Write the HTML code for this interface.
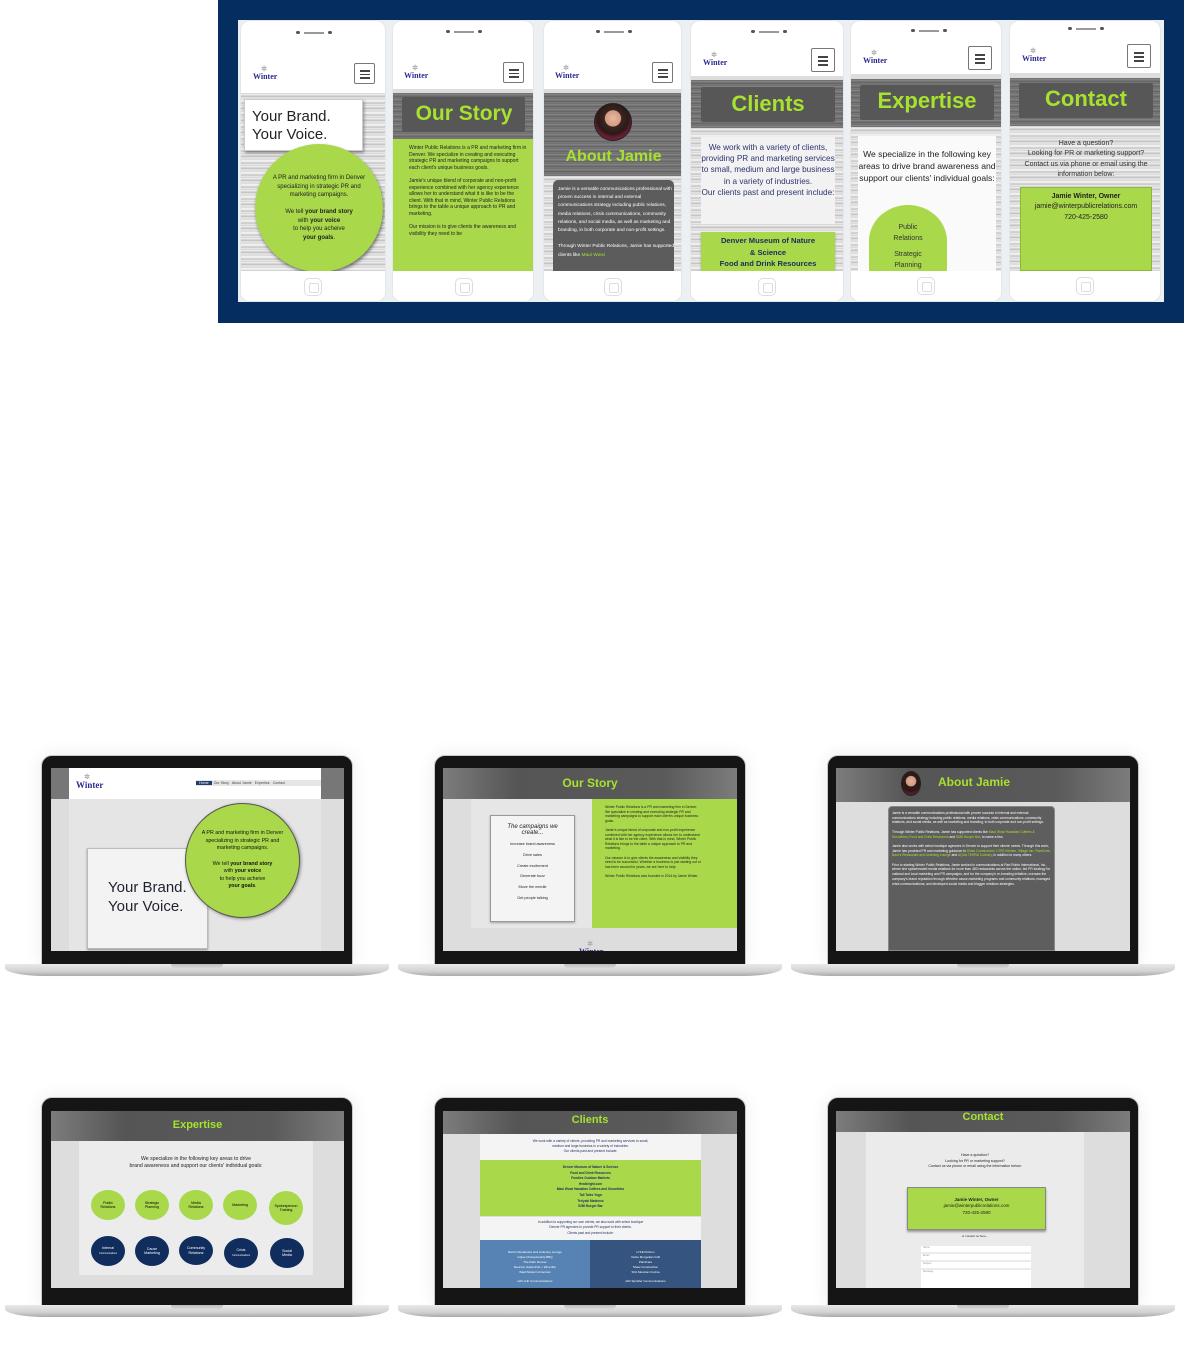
<!DOCTYPE html>
<html><head><meta charset="utf-8">
<style>
*{margin:0;padding:0;box-sizing:border-box}
body{width:1184px;height:1347px;background:#fff;position:relative;overflow:hidden;font-family:"Liberation Sans",sans-serif}
.a{position:absolute}
.banner{left:218px;top:0;width:966px;height:323px;background:#052d5f}
.phone{background:#fff;border:1px solid #e4e6e8;border-radius:10px;overflow:hidden}
.streak{background:repeating-linear-gradient(180deg,#d0d0d0 0px,#f4f4f4 2px,#b8b8b8 3px,#ececec 5px,#d4d4d4 6px,#fafafa 8px,#c4c4c4 10px,#f0f0f0 12px)}
.dstreak{background:repeating-linear-gradient(180deg,#6a6a6a 0,#8a8a8a 2px,#5e5e5e 3px,#7d7d7d 5px)}
.green{background:#a9d84a}
.gt{color:#a6e22e;font-weight:bold;text-align:center}
.logo{font-family:"Liberation Serif",serif;font-weight:bold;color:#2a2b8e;font-size:8px;line-height:8px}
.logo i{display:block;font-style:normal;color:#aaa;font-size:7px;text-align:center;width:22px}
.ham{border:1px solid #777;border-radius:2px;background:#fff;width:21px;height:21px}
.ham b{position:absolute;left:5px;width:10px;height:1.5px;background:#444}
.home{width:18px;height:18px;border:1px solid #ddd;border-radius:5px}
.home:after{content:"";position:absolute;left:4px;top:4px;width:8px;height:8px;border:1px solid #ddd;border-radius:2px}
.tx{font-size:5px;line-height:6.6px;color:#222}
.bezel{background:#151515;border:1px solid #c9c9c9;border-radius:11px 11px 0 0;box-shadow:0 0 18px rgba(0,0,0,.08)}
.screen{overflow:hidden;background:#ddd}
.base{background:linear-gradient(180deg,#e8e8e8,#d2d2d2 60%,#a9a9a9);border-radius:0 0 40px 40px/0 0 8px 8px;height:12px}
.notch{background:linear-gradient(180deg,#bdbdbd,#d6d6d6);border-radius:0 0 5px 5px;height:4px;width:52px}
.hdr{background:linear-gradient(90deg,#7c7c7c,#555 25%,#5a5a5a 75%,#7c7c7c)}
.lt{font-size:3.4px;line-height:4.6px;color:#222}
.circ{border-radius:50%;text-align:center;font-size:3.6px;line-height:4.2px;display:flex;align-items:center;justify-content:center}
.circ>div{width:100%}
</style></head><body>

<div class="a banner"></div>
<div class="a" style="left:238px;top:20px;width:926px;height:282px;background:#edf0f2"></div>

<!-- PHONE 1 -->
<div class="a phone" style="left:240px;top:20px;width:146px;height:282px">
 <div class="a" style="left:55px;top:10px;width:4px;height:3px;border-radius:2px;background:#555"></div>
 <div class="a" style="left:63px;top:11px;width:20px;height:1.5px;background:#999"></div>
 <div class="a" style="left:87px;top:10px;width:4px;height:3px;border-radius:2px;background:#555"></div>
 <div class="a logo" style="left:12px;top:44px"><i>✲</i>Winter</div>
 <div class="a ham" style="left:113px;top:42px"><b style="top:6px"></b><b style="top:9.5px"></b><b style="top:13px"></b></div>
 <div class="a streak" style="left:0;top:72px;width:146px;height:178px"></div>
 <div class="a" style="left:3px;top:78px;width:119px;height:52px;background:#fff;border:1px solid #ccc;box-shadow:1px 2px 3px rgba(0,0,0,.4);font-size:15px;line-height:18px;padding:8px 0 0 7px;color:#222">Your Brand.<br>Your Voice.</div>
 <div class="a green circ" style="left:14px;top:123px;width:128px;height:128px;box-shadow:1px 2px 3px rgba(0,0,0,.5);font-size:6px;line-height:8.5px;color:#222;padding:10px"><div>A PR and marketing firm in Denver specializing in strategic PR and marketing campaigns.<br><br>We tell <b>your brand story</b><br>with <b>your voice</b><br>to help you acheive<br><b>your goals</b>.</div></div>
 <div class="a" style="left:0;top:250px;width:146px;height:32px;background:#fff"></div>
 <div class="a home" style="left:63px;top:257px"></div>
</div>

<!-- PHONE 2 -->
<div class="a phone" style="left:392px;top:20px;width:142px;height:282px">
 <div class="a" style="left:53px;top:9px;width:4px;height:3px;border-radius:2px;background:#555"></div>
 <div class="a" style="left:61px;top:10px;width:20px;height:1.5px;background:#999"></div>
 <div class="a" style="left:85px;top:9px;width:4px;height:3px;border-radius:2px;background:#555"></div>
 <div class="a logo" style="left:11px;top:43px"><i>✲</i>Winter</div>
 <div class="a ham" style="left:110px;top:41px"><b style="top:6px"></b><b style="top:9.5px"></b><b style="top:13px"></b></div>
 <div class="a" style="left:0;top:68px;width:142px;height:4px;background:#ddd"></div>
 <div class="a dstreak" style="left:0;top:72px;width:142px;height:46px"></div>
 <div class="a" style="left:9px;top:76px;width:123px;height:35px;background:#575757;border-radius:2px"></div>
 <div class="a gt" style="left:0;top:80px;width:142px;font-size:21px;line-height:26px">Our Story</div>
 <div class="a green" style="left:0;top:118px;width:142px;height:132px"></div>
 <div class="a tx" style="left:16px;top:124px;width:118px">Winter Public Relations is a PR and marketing firm in Denver. We specialize in creating and executing strategic PR and marketing campaigns to support each client's unique business goals.<br><br>Jamie's unique blend of corporate and non-profit experience combined with her agency experience allows her to understand what it is like to be the client. With that in mind, Winter Public Relations brings to the table a unique approach to PR and marketing.<br><br>Our mission is to give clients the awareness and visibility they need to be</div>
 <div class="a" style="left:0;top:250px;width:142px;height:32px;background:#fff"></div>
 <div class="a home" style="left:62px;top:257px"></div>
</div>

<!-- PHONE 3 -->
<div class="a phone" style="left:543px;top:20px;width:139px;height:282px">
 <div class="a" style="left:52px;top:9px;width:4px;height:3px;border-radius:2px;background:#555"></div>
 <div class="a" style="left:60px;top:10px;width:20px;height:1.5px;background:#999"></div>
 <div class="a" style="left:84px;top:9px;width:4px;height:3px;border-radius:2px;background:#555"></div>
 <div class="a logo" style="left:11px;top:43px"><i>✲</i>Winter</div>
 <div class="a ham" style="left:108px;top:41px"><b style="top:6px"></b><b style="top:9.5px"></b><b style="top:13px"></b></div>
 <div class="a" style="left:0;top:68px;width:139px;height:4px;background:#ddd"></div>
 <div class="a dstreak" style="left:0;top:72px;width:139px;height:83px"></div>
 <div class="a" style="left:50px;top:82px;width:38px;height:38px;border-radius:50%;background:radial-gradient(circle at 50% 40%,#e7b9a0 0,#d49a80 28%,#3a2520 30%,#2c1a17 55%,#6b1d3a 70%);border:1px solid #222"></div>
 <div class="a gt" style="left:0;top:126px;width:139px;font-size:16px;line-height:20px">About Jamie</div>
 <div class="a streak" style="left:0;top:155px;width:139px;height:95px"></div>
 <div class="a" style="left:9px;top:159px;width:121px;height:91px;background:#5c5c5c;border-radius:5px 5px 0 0"></div>
 <div class="a tx" style="left:14px;top:165px;width:116px;color:#fff;font-size:4.8px;line-height:8.2px">Jamie is a versatile communications professional with proven success in internal and external communications strategy including public relations, media relations, crisis communications, community relations, and social media, as well as marketing and branding, in both corporate and non-profit settings.<br><br>Through Winter Public Relations, Jamie has supported clients like <span style="color:#a6e22e">Maui Wowi</span></div>
 <div class="a" style="left:0;top:250px;width:139px;height:32px;background:#fff"></div>
 <div class="a home" style="left:60px;top:257px"></div>
</div>

<!-- PHONE 4 -->
<div class="a phone" style="left:690px;top:20px;width:154px;height:282px">
 <div class="a" style="left:60px;top:9px;width:4px;height:3px;border-radius:2px;background:#555"></div>
 <div class="a" style="left:68px;top:10px;width:20px;height:1.5px;background:#999"></div>
 <div class="a" style="left:92px;top:9px;width:4px;height:3px;border-radius:2px;background:#555"></div>
 <div class="a logo" style="left:12px;top:30px"><i>✲</i>Winter</div>
 <div class="a ham" style="left:120px;top:27px;width:24px;height:24px"><b style="top:7px;left:6px"></b><b style="top:11px;left:6px"></b><b style="top:15px;left:6px"></b></div>
 <div class="a" style="left:0;top:55px;width:154px;height:4px;background:#ddd"></div>
 <div class="a dstreak" style="left:0;top:59px;width:154px;height:48px"></div>
 <div class="a" style="left:10px;top:66px;width:134px;height:35px;background:#575757;border-radius:2px"></div>
 <div class="a gt" style="left:0;top:69px;width:154px;font-size:22px;line-height:28px">Clients</div>
 <div class="a streak" style="left:0;top:107px;width:154px;height:143px"></div>
 <div class="a" style="left:10px;top:116px;width:134px;height:87px;background:#f2f2f2"></div>
 <div class="a" style="left:10px;top:121px;width:134px;text-align:center;font-size:8.2px;line-height:11.2px;color:#2b3470">We work with a variety of clients, providing PR and marketing services to small, medium and large business in a variety of industries.<br>Our clients past and present include:</div>
 <div class="a green" style="left:10px;top:211px;width:134px;height:39px;box-shadow:0 1px 2px rgba(0,0,0,.3)"></div>
 <div class="a" style="left:10px;top:214px;width:134px;text-align:center;font-size:7.6px;line-height:11.5px;color:#1c2a5e;font-weight:bold">Denver Museum of Nature<br>&amp; Science<br>Food and Drink Resources</div>
 <div class="a" style="left:0;top:250px;width:154px;height:32px;background:#fff"></div>
 <div class="a home" style="left:67px;top:257px"></div>
</div>

<!-- PHONE 5 -->
<div class="a phone" style="left:850px;top:20px;width:152px;height:282px">
 <div class="a" style="left:60px;top:8px;width:4px;height:3px;border-radius:2px;background:#555"></div>
 <div class="a" style="left:68px;top:9px;width:20px;height:1.5px;background:#999"></div>
 <div class="a" style="left:92px;top:8px;width:4px;height:3px;border-radius:2px;background:#555"></div>
 <div class="a logo" style="left:12px;top:28px"><i>✲</i>Winter</div>
 <div class="a ham" style="left:117px;top:25px;width:24px;height:24px"><b style="top:7px;left:6px"></b><b style="top:11px;left:6px"></b><b style="top:15px;left:6px"></b></div>
 <div class="a" style="left:0;top:53px;width:152px;height:5px;background:#ddd"></div>
 <div class="a dstreak" style="left:0;top:58px;width:152px;height:48px"></div>
 <div class="a" style="left:9px;top:64px;width:134px;height:35px;background:#575757;border-radius:2px"></div>
 <div class="a gt" style="left:0;top:66px;width:152px;font-size:22px;line-height:28px">Expertise</div>
 <div class="a streak" style="left:0;top:106px;width:152px;height:144px"></div>
 <div class="a" style="left:7px;top:115px;width:138px;height:135px;background:#fafafa"></div>
 <div class="a" style="left:7px;top:127px;width:138px;text-align:center;font-size:8.6px;line-height:12.2px;color:#222">We specialize in the following key areas to drive brand awareness and support our clients' individual goals:</div>
 <div class="a green" style="left:18px;top:184px;width:78px;height:90px;border-radius:50% 50% 0 0/40% 40% 0 0"></div>
 <div class="a" style="left:18px;top:202px;width:78px;text-align:center;font-size:7px;line-height:10.5px;color:#333">Public<br>Relations<br><span style="display:block;height:6px"></span>Strategic<br>Planning</div>
 <div class="a" style="left:0;top:250px;width:152px;height:32px;background:#fff"></div>
 <div class="a home" style="left:66px;top:256px"></div>
</div>

<!-- PHONE 6 -->
<div class="a phone" style="left:1009px;top:20px;width:152px;height:282px">
 <div class="a" style="left:58px;top:6px;width:4px;height:3px;border-radius:2px;background:#555"></div>
 <div class="a" style="left:66px;top:7px;width:20px;height:1.5px;background:#999"></div>
 <div class="a" style="left:90px;top:6px;width:4px;height:3px;border-radius:2px;background:#555"></div>
 <div class="a logo" style="left:12px;top:26px"><i>✲</i>Winter</div>
 <div class="a ham" style="left:117px;top:23px;width:24px;height:24px"><b style="top:7px;left:6px"></b><b style="top:11px;left:6px"></b><b style="top:15px;left:6px"></b></div>
 <div class="a" style="left:0;top:52px;width:152px;height:5px;background:#ddd"></div>
 <div class="a dstreak" style="left:0;top:57px;width:152px;height:48px"></div>
 <div class="a" style="left:9px;top:62px;width:134px;height:35px;background:#575757;border-radius:2px"></div>
 <div class="a gt" style="left:0;top:64px;width:152px;font-size:22px;line-height:28px">Contact</div>
 <div class="a streak" style="left:0;top:105px;width:152px;height:145px"></div>
 <div class="a" style="left:4px;top:118px;width:144px;text-align:center;font-size:7px;line-height:10.3px;color:#333">Have a question?<br>Looking for PR or marketing support?<br>Contact us via phone or email using the information below:</div>
 <div class="a green" style="left:10px;top:166px;width:132px;height:84px;border:1px solid #8cb83a"></div>
 <div class="a" style="left:10px;top:171px;width:132px;text-align:center;font-size:7px;line-height:10.3px;color:#222"><b>Jamie Winter, Owner</b><br>jamie@winterpublicrelations.com<br>720-425-2580</div>
 <div class="a" style="left:0;top:250px;width:152px;height:32px;background:#fff"></div>
 <div class="a home" style="left:66px;top:256px"></div>
</div>

<!-- ROW 1 LAPTOP 1 -->
<div class="a bezel" style="left:41px;top:755px;width:312px;height:210px"></div>
<div class="a screen streak" style="left:51px;top:768px;width:293px;height:183px">
 <div class="a" style="left:0;top:0;width:293px;height:31px;background:linear-gradient(90deg,#777 0,#777 18px,#fff 18px,#fff 270px,#777 270px)"></div>
 <div class="a logo" style="left:25px;top:5px;font-size:9px"><i>✲</i>Winter</div>
 <div class="a" style="left:145px;top:12px;width:125px;height:6px;background:#e6e6e6"></div>
 <div class="a" style="left:145px;top:12px;font-size:3.6px;line-height:6px;color:#444;white-space:nowrap"><span style="background:#1e3d6e;color:#fff;padding:0 3px">Home</span>&nbsp; Our Story &nbsp; About Jamie &nbsp; Expertise &nbsp; Contact</div>
 <div class="a" style="left:18px;top:31px;width:252px;height:152px;background:rgba(255,255,255,.25)"></div>
 <div class="a" style="left:36px;top:80px;width:121px;height:101px;background:#f3f3f3;border:1px solid #bbb;box-shadow:0 1px 2px rgba(0,0,0,.4)"></div>
 <div class="a" style="left:57px;top:110px;font-size:15px;line-height:19px;color:#1f2230">Your Brand.<br>Your Voice.</div>
 <div class="a green circ" style="left:134px;top:35px;width:115px;height:115px;border:1px solid #555;box-shadow:1px 1px 3px rgba(0,0,0,.4);font-size:5.3px;line-height:7.6px;color:#111;padding:8px"><div>A PR and marketing firm in Denver specializing in strategic PR and marketing campaigns.<br><br>We tell <b>your brand story</b><br>with <b>your voice</b><br>to help you acheive<br><b>your goals</b>.</div></div>
</div>
<div class="a base" style="left:5px;top:964px;width:384px"></div>
<div class="a notch" style="left:171px;top:964px"></div>

<!-- ROW 1 LAPTOP 2 -->
<div class="a bezel" style="left:434px;top:755px;width:312px;height:210px"></div>
<div class="a screen streak" style="left:443px;top:768px;width:294px;height:183px">
 <div class="a hdr" style="left:0;top:0;width:294px;height:31px"></div>
 <div class="a gt" style="left:0;top:8px;width:294px;font-size:12px">Our Story</div>
 <div class="a" style="left:28px;top:31px;width:121px;height:129px;background:#e6e6e6"></div>
 <div class="a" style="left:47px;top:47px;width:85px;height:107px;background:#f4f4f4;border:1px solid #999;box-shadow:0 1px 2px rgba(0,0,0,.3)"></div>
 <div class="a" style="left:47px;top:56px;width:85px;text-align:center;font-size:3.8px;line-height:10.8px;color:#222"><i style="font-size:6px;line-height:6px;display:block;margin-bottom:3px">The campaigns we<br>create...</i>Increase brand awareness<br>Drive sales<br>Create excitement<br>Generate buzz<br>Move the needle<br>Get people talking</div>
 <div class="a green" style="left:149px;top:31px;width:145px;height:129px"></div>
 <div class="a lt" style="left:162px;top:37px;width:96px">Winter Public Relations is a PR and marketing firm in Denver. We specialize in creating and executing strategic PR and marketing campaigns to support each client's unique business goals.<br><br>Jamie's unique blend of corporate and non-profit experience combined with her agency experience allows her to understand what it is like to be the client. With that in mind, Winter Public Relations brings to the table a unique approach to PR and marketing.<br><br>Our mission is to give clients the awareness and visibility they need to be successful. Whether a business is just starting out or has been around for years, we are here to help.<br><br>Winter Public Relations was founded in 2014 by Jamie Winter.</div>
 <div class="a logo" style="left:136px;top:172px"><i>✲</i>Winter</div>
</div>
<div class="a base" style="left:398px;top:964px;width:384px"></div>
<div class="a notch" style="left:564px;top:964px"></div>

<!-- ROW 1 LAPTOP 3 -->
<div class="a bezel" style="left:827px;top:755px;width:312px;height:210px"></div>
<div class="a screen streak" style="left:836px;top:768px;width:294px;height:183px">
 <div class="a hdr" style="left:0;top:0;width:294px;height:34px"></div>
 <div class="a" style="left:65px;top:3px;width:20px;height:25px;border-radius:50%;background:radial-gradient(circle at 50% 40%,#e2b49c 0,#d09a80 30%,#2c1a17 34%,#2c1a17 60%,#5a1a30 75%);border:1px solid #222"></div>
 <div class="a gt" style="left:90px;top:7px;width:90px;font-size:12px;text-align:left;margin-left:12px">About Jamie</div>
 <div class="a" style="left:52px;top:38px;width:167px;height:145px;background:#5e5e5e;border-radius:4px 4px 0 0;border:1px solid #888"></div>
 <div class="a lt" style="left:56px;top:43px;width:160px;color:#fff;font-size:3.3px;line-height:4.7px">Jamie is a versatile communications professional with proven success in internal and external communications strategy including public relations, media relations, crisis communications, community relations, and social media, as well as marketing and branding, in both corporate and non-profit settings.<br><br>Through Winter Public Relations, Jamie has supported clients like <span style="color:#a6e22e">Maui Wowi Hawaiian Coffees &amp; Smoothies</span>, <span style="color:#a6e22e">Food and Drink Resources</span> and <span style="color:#a6e22e">5280 Burger Bar</span>, to name a few.<br><br>Jamie also works with select boutique agencies in Denver to support their clients' needs. Through this work, Jamie has provided PR and marketing guidance to <span style="color:#a6e22e">Shaw Construction, LYFE Kitchen, Village Inn, PaintCare, Baur's Restaurant and Listening Lounge</span> and <span style="color:#a6e22e">AQUA TERRA Culinary</span>, in addition to many others.<br><br>Prior to starting Winter Public Relations, Jamie worked in communications at Red Robin International, Inc., where she spearheaded media relations for more than 480 restaurants across the nation; led PR strategy for national and local marketing and PR campaigns, and for the company's re-branding initiative; oversaw the company's brand reputation through effective cause-marketing programs and community relations; managed crisis communications; and developed social media and blogger relations strategies.</div>
</div>
<div class="a base" style="left:791px;top:964px;width:384px"></div>
<div class="a notch" style="left:957px;top:964px"></div>

<!-- ROW 2 LAPTOP 1 Expertise -->
<div class="a bezel" style="left:41px;top:1097px;width:312px;height:209px"></div>
<div class="a screen streak" style="left:51px;top:1111px;width:293px;height:177px">
 <div class="a hdr" style="left:0;top:0;width:293px;height:30px"></div>
 <div class="a gt" style="left:0;top:8px;width:293px;font-size:11px">Expertise</div>
 <div class="a" style="left:28px;top:30px;width:234px;height:134px;background:#ececec"></div>
 <div class="a" style="left:28px;top:45px;width:234px;text-align:center;font-size:5.2px;line-height:7px;color:#222">We specialize in the following key areas to drive<br>brand awareness and support our clients' individual goals:</div>
 <div class="a green circ" style="left:40px;top:79px;width:34px;height:30px"><div>Public<br>Relations</div></div>
 <div class="a green circ" style="left:84px;top:79px;width:34px;height:30px"><div>Strategic<br>Planning</div></div>
 <div class="a green circ" style="left:128px;top:79px;width:34px;height:30px"><div>Media<br>Relations</div></div>
 <div class="a green circ" style="left:172px;top:79px;width:34px;height:30px"><div>Marketing</div></div>
 <div class="a green circ" style="left:218px;top:80px;width:34px;height:34px"><div>Spokesperson<br>Training</div></div>
 <div class="a circ" style="left:40px;top:125px;width:34px;height:30px;background:#102d5e;color:#fff"><div>Internal<br><span style="font-size:2.4px">Communications</span></div></div>
 <div class="a circ" style="left:84px;top:125px;width:34px;height:30px;background:#102d5e;color:#fff"><div>Cause<br>Marketing</div></div>
 <div class="a circ" style="left:128px;top:125px;width:34px;height:29px;background:#102d5e;color:#fff"><div>Community<br>Relations</div></div>
 <div class="a circ" style="left:173px;top:127px;width:34px;height:30px;background:#102d5e;color:#fff"><div>Crisis<br><span style="font-size:2.4px">Communications</span></div></div>
 <div class="a circ" style="left:219px;top:127px;width:34px;height:30px;background:#102d5e;color:#fff"><div>Social<br>Media</div></div>
</div>
<div class="a base" style="left:5px;top:1305px;width:384px"></div>
<div class="a notch" style="left:171px;top:1305px"></div>

<!-- ROW 2 LAPTOP 2 Clients -->
<div class="a bezel" style="left:434px;top:1097px;width:312px;height:209px"></div>
<div class="a screen streak" style="left:443px;top:1111px;width:294px;height:177px">
 <div class="a hdr" style="left:0;top:0;width:294px;height:23px"></div>
 <div class="a gt" style="left:0;top:3px;width:294px;font-size:11px">Clients</div>
 <div class="a" style="left:37px;top:23px;width:221px;height:26px;background:#f4f4f4"></div>
 <div class="a lt" style="left:37px;top:28px;width:221px;text-align:center;font-size:3.3px;line-height:5px;color:#1c2a5e">We work with a variety of clients, providing PR and marketing services to small,<br>medium and large business in a variety of industries.<br>Our clients past and present include:</div>
 <div class="a green" style="left:37px;top:49px;width:221px;height:56px"></div>
 <div class="a lt" style="left:37px;top:54px;width:221px;text-align:center;font-weight:bold;font-size:3.2px;line-height:5.6px;color:#1c2a5e">Denver Museum of Nature &amp; Science<br>Food and Drink Resources<br>Foodies Outdoor Markets<br>Healbright.com<br>Maui Wowi Hawaiian Coffees and Smoothies<br>Tall Tales Yoga<br>Teriyaki Madness<br>5280 Burger Bar</div>
 <div class="a" style="left:37px;top:106px;width:221px;height:23px;background:#f4f4f4"></div>
 <div class="a lt" style="left:37px;top:109px;width:221px;text-align:center;font-size:3.2px;line-height:5.4px;color:#1c2a5e">In addition to supporting our own clients, we also work with select boutique<br>Denver PR agencies to provide PR support to their clients.<br>Clients past and present include:</div>
 <div class="a" style="left:37px;top:129px;width:110px;height:48px;background:#5683b3"></div>
 <div class="a" style="left:147px;top:129px;width:111px;height:48px;background:#35547f"></div>
 <div class="a lt" style="left:37px;top:139px;width:110px;text-align:center;color:#fff;font-size:3px;line-height:4.9px">Baur's Restaurant and Listening Lounge<br>GQue Championship BBQ<br>The Palm Denver<br>Reunion GastroPub + Wine Bar<br>Ward Modern American<br><br>with LHF Communications</div>
 <div class="a lt" style="left:147px;top:139px;width:111px;text-align:center;color:#fff;font-size:3px;line-height:4.9px">LYFE Kitchen<br>NuHu Mongolian Grill<br>PaintCare<br>Shaw Construction<br>SOL Mexican Cocina<br><br>with Spindler Communications</div>
</div>
<div class="a base" style="left:398px;top:1305px;width:384px"></div>
<div class="a notch" style="left:564px;top:1305px"></div>

<!-- ROW 2 LAPTOP 3 Contact -->
<div class="a bezel" style="left:827px;top:1097px;width:312px;height:209px"></div>
<div class="a screen streak" style="left:836px;top:1111px;width:294px;height:177px">
 <div class="a hdr" style="left:0;top:0;width:294px;height:21px"></div>
 <div class="a gt" style="left:0;top:0;width:294px;font-size:11px">Contact</div>
 <div class="a" style="left:30px;top:21px;width:218px;height:156px;background:rgba(245,245,245,.55)"></div>
 <div class="a lt" style="left:30px;top:42px;width:218px;text-align:center;font-size:3.6px;line-height:5.6px">Have a question?<br>Looking for PR or marketing support?<br>Contact us via phone or email using the information below:</div>
 <div class="a green" style="left:71px;top:76px;width:139px;height:43px;border:1px solid #888;box-shadow:0 2px 2px rgba(0,0,0,.35)"></div>
 <div class="a lt" style="left:71px;top:86px;width:139px;text-align:center;font-size:4.5px;line-height:6.3px"><b>Jamie Winter, Owner</b><br>jamie@winterpublicrelations.com<br>720-425-2580</div>
 <div class="a lt" style="left:30px;top:123px;width:218px;text-align:center;font-size:3px">or contact us here...</div>
 <div class="a" style="left:85px;top:135px;width:110px;height:6px;background:#fff;font-size:2.5px;color:#999;padding-left:2px">Name</div>
 <div class="a" style="left:85px;top:143px;width:110px;height:6px;background:#fff;font-size:2.5px;color:#999;padding-left:2px">Email</div>
 <div class="a" style="left:85px;top:151px;width:110px;height:6px;background:#fff;font-size:2.5px;color:#999;padding-left:2px">Subject</div>
 <div class="a" style="left:85px;top:159px;width:110px;height:20px;background:#fff;font-size:2.5px;color:#999;padding-left:2px">Message</div>
</div>
<div class="a base" style="left:791px;top:1305px;width:384px"></div>
<div class="a notch" style="left:957px;top:1305px"></div>

</body></html>
